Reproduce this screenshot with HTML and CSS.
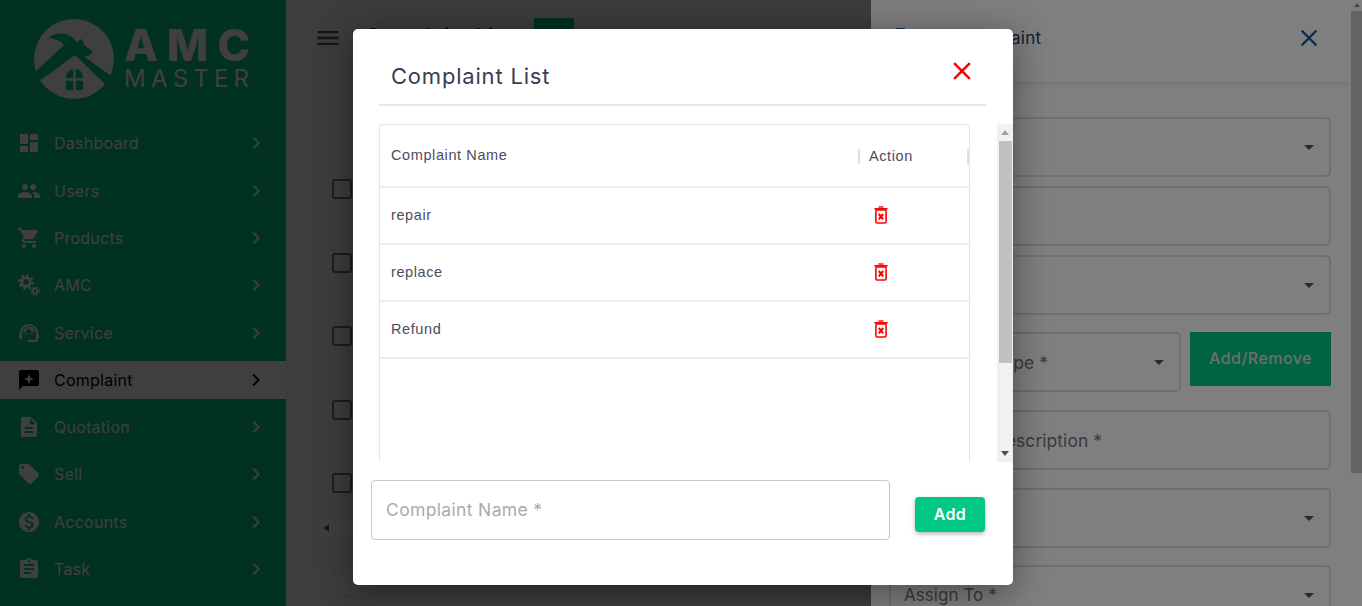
FILE: index.html
```html
<!DOCTYPE html>
<html lang="en">
<head>
<meta charset="utf-8">
<title>Complaint List</title>
<link rel="stylesheet" href="styles.css">
</head>
<body>
<svg class="defs" width="0" height="0" aria-hidden="true">
  <symbol id="chev" viewBox="0 0 24 24"><path d="M10 6L8.59 7.41 13.17 12l-4.58 4.59L10 18l6-6z"/></symbol>
  <symbol id="drop" viewBox="0 0 24 24"><path d="M7 10l5 5 5-5z"/></symbol>
  <symbol id="close" viewBox="0 0 24 24"><path d="M19 6.41L17.59 5 12 10.59 6.41 5 5 6.41 10.59 12 5 17.59 6.41 19 12 13.41 17.59 19 19 17.59 13.41 12z"/></symbol>
  <symbol id="trash" viewBox="0 0 14 18"><path d="M4.500 1h5" fill="none" stroke="currentColor" stroke-width="1.400"/><path d="M.5 2.900h13" fill="none" stroke="currentColor" stroke-width="1.800"/><rect x="1.900" y="4" width="10.200" height="13" rx="1.300" fill="none" stroke="currentColor" stroke-width="1.600"/><path d="M4.800 8l4.400 5.400M9.200 8l-4.400 5.400" fill="none" stroke="currentColor" stroke-width="2"/></symbol>
</svg>
<div class="app">
  <aside class="sidebar">
    <div class="logo">
      <svg class="logo-mark" viewBox="0 0 80 80" aria-hidden="true">
        <circle cx="40" cy="40" r="40" class="lm-fill"/>
        <path class="lm-cut" d="M0 54L30 26Q25 20 14 19 22 13 32 15L38 18 43 23 47 20 50 23 49 25 59 33 56 36 51 38 81 60 72 66 41 36 7 61z"/>
        <path class="lm-cut" d="M32 71V59Q32 50 40.500 50 49 50 49 59V71z"/>
        <path class="lm-line" d="M40.500 50V71M32 60.500H49"/>
      </svg>
      <div class="logo-text"><span class="logo-amc">AMC</span><span class="logo-master">MASTER</span></div>
    </div>
    <nav class="nav">
      <a class="nav-item"><svg class="nav-ic" viewBox="0 0 24 24"><path d="M3 13h8V3H3v10zm0 8h8v-6H3v6zm10 0h8V11h-8v10zm0-18v6h8V3h-8z"/></svg><span class="nav-label">Dashboard</span><svg class="nav-chev"><use href="#chev"/></svg></a>
      <a class="nav-item"><svg class="nav-ic" viewBox="0 0 24 24"><path d="M16 11c1.66 0 2.99-1.34 2.99-3S17.66 5 16 5c-1.66 0-3 1.34-3 3s1.34 3 3 3zm-8 0c1.66 0 2.99-1.34 2.99-3S9.66 5 8 5C6.34 5 5 6.34 5 8s1.34 3 3 3zm0 2c-2.33 0-7 1.17-7 3.5V19h14v-2.5c0-2.33-4.67-3.5-7-3.5zm8 0c-.29 0-.62.02-.97.05 1.16.84 1.97 1.97 1.97 3.45V19h6v-2.5c0-2.33-4.67-3.5-7-3.5z"/></svg><span class="nav-label">Users</span><svg class="nav-chev"><use href="#chev"/></svg></a>
      <a class="nav-item"><svg class="nav-ic" viewBox="0 0 24 24"><path d="M7 18c-1.1 0-1.99.9-1.99 2S5.9 22 7 22s2-.9 2-2-.9-2-2-2zM1 2v2h2l3.6 7.59-1.35 2.45c-.16.28-.25.61-.25.96 0 1.1.9 2 2 2h12v-2H7.42c-.14 0-.25-.11-.25-.25l.03-.12.9-1.63h7.45c.75 0 1.41-.41 1.75-1.03l3.58-6.49c.08-.14.12-.31.12-.48 0-.55-.45-1-1-1H5.21l-.94-2H1zm16 16c-1.1 0-1.99.9-1.99 2s.89 2 1.99 2 2-.9 2-2-.9-2-2-2z"/></svg><span class="nav-label">Products</span><svg class="nav-chev"><use href="#chev"/></svg></a>
      <a class="nav-item"><svg class="nav-ic" viewBox="0 0 24 24"><circle cx="9" cy="9" r="4.200" fill="none" stroke="currentColor" stroke-width="3"/><circle cx="9" cy="9" r="6.600" fill="none" stroke="currentColor" stroke-width="2.400" stroke-dasharray="2.600 2.600"/><circle cx="18" cy="18" r="2.400" fill="none" stroke="currentColor" stroke-width="1.800"/><circle cx="18" cy="18" r="4" fill="none" stroke="currentColor" stroke-width="1.600" stroke-dasharray="1.700 1.500"/></svg><span class="nav-label">AMC</span><svg class="nav-chev"><use href="#chev"/></svg></a>
      <a class="nav-item"><svg class="nav-ic" viewBox="0 0 24 24"><path d="M21 12.22C21 6.73 16.74 3 12 3c-4.69 0-9 3.65-9 9.28-.6.34-1 .98-1 1.72v2c0 1.1.9 2 2 2h1v-6.1c0-3.87 3.13-7 7-7s7 3.13 7 7V19h-8v2h8c1.1 0 2-.9 2-2v-1.22c.59-.31 1-.92 1-1.64v-2.3c0-.7-.41-1.31-1-1.62z"/><circle cx="9" cy="13" r="1"/><circle cx="15" cy="13" r="1"/><path d="M18 11.03C17.52 8.18 15.04 6 12.05 6c-3.03 0-6.29 2.51-6.03 6.45 2.47-1.01 4.33-3.21 4.86-5.89 1.31 2.63 4 4.44 7.12 4.47z"/></svg><span class="nav-label">Service</span><svg class="nav-chev"><use href="#chev"/></svg></a>
      <a class="nav-item nav-item-active"><svg class="nav-ic" viewBox="0 0 24 24"><path d="M20 2H4c-1.1 0-2 .9-2 2v18l4-4h14c1.1 0 2-.9 2-2V4c0-1.1-.9-2-2-2z"/><path class="nav-spark" d="M12 6l1.300 3.700L17 11l-3.700 1.300L12 16l-1.300-3.700L7 11l3.700-1.300z"/></svg><span class="nav-label">Complaint</span><svg class="nav-chev"><use href="#chev"/></svg></a>
      <a class="nav-item"><svg class="nav-ic" viewBox="0 0 24 24"><path d="M14 2H6c-1.1 0-1.99.9-1.99 2L4 20c0 1.1.89 2 1.99 2H18c1.1 0 2-.9 2-2V8l-6-6zm2 16H8v-2h8v2zm0-4H8v-2h8v2zm-3-5V3.500L18.500 9H13z"/></svg><span class="nav-label">Quotation</span><svg class="nav-chev"><use href="#chev"/></svg></a>
      <a class="nav-item"><svg class="nav-ic" viewBox="0 0 24 24"><path d="M21.41 11.58l-9-9C12.05 2.22 11.55 2 11 2H4c-1.1 0-2 .9-2 2v7c0 .55.22 1.05.59 1.42l9 9c.36.36.86.58 1.41.58.55 0 1.05-.22 1.41-.59l7-7c.37-.36.59-.86.59-1.41 0-.55-.23-1.06-.59-1.42zM5.500 7C4.670 7 4 6.330 4 5.500S4.670 4 5.500 4 7 4.670 7 5.500 6.330 7 5.500 7z"/></svg><span class="nav-label">Sell</span><svg class="nav-chev"><use href="#chev"/></svg></a>
      <a class="nav-item"><svg class="nav-ic" viewBox="0 0 24 24"><path d="M12 2C6.48 2 2 6.48 2 12s4.48 10 10 10 10-4.48 10-10S17.52 2 12 2zm1.41 16.09V20h-2.67v-1.93c-1.71-.36-3.16-1.46-3.27-3.4h1.96c.1 1.05.82 1.87 2.65 1.87 1.96 0 2.4-.98 2.4-1.59 0-.83-.44-1.61-2.67-2.14-2.48-.6-4.18-1.62-4.18-3.67 0-1.72 1.39-2.84 3.11-3.21V4h2.67v1.95c1.86.45 2.79 1.86 2.85 3.39H14.3c-.05-1.11-.64-1.87-2.22-1.87-1.5 0-2.4.68-2.4 1.64 0 .84.65 1.39 2.67 1.91s4.18 1.39 4.18 3.91c-.01 1.83-1.38 2.83-3.12 3.16z"/></svg><span class="nav-label">Accounts</span><svg class="nav-chev"><use href="#chev"/></svg></a>
      <a class="nav-item"><svg class="nav-ic" viewBox="0 0 24 24"><path d="M19 3h-4.18C14.4 1.84 13.3 1 12 1c-1.3 0-2.4.84-2.82 2H5c-1.1 0-2 .9-2 2v14c0 1.1.9 2 2 2h14c1.1 0 2-.9 2-2V5c0-1.1-.9-2-2-2zm-7 0c.55 0 1 .45 1 1s-.45 1-1 1-1-.45-1-1 .45-1 1-1zm2 14H7v-2h7v2zm3-4H7v-2h10v2zm0-4H7V7h10v2z"/></svg><span class="nav-label">Task</span><svg class="nav-chev"><use href="#chev"/></svg></a>
    </nav>
  </aside>
  <main class="main">
    <header class="topbar">
      <svg class="menu-ic" viewBox="0 0 24 24"><path d="M3 18h18v-2H3v2zm0-5h18v-2H3v2zm0-7v2h18V6H3z"/></svg>
      <h1 class="page-title">Complaint List</h1>
      <span class="page-add"></span>
    </header>
    <div class="rows">
      <div class="row"><span class="check"></span></div>
      <div class="row"><span class="check"></span></div>
      <div class="row"><span class="check"></span></div>
      <div class="row"><span class="check"></span></div>
      <div class="row row-last"><span class="check"></span></div>
    </div>
    <div class="hscroll"><span class="hscroll-arrow"></span><span class="hscroll-thumb"></span></div>
    <div class="table-foot"></div>
  </main>
</div>
<div class="backdrop"></div>
<section class="drawer">
  <div class="drawer-body">
    <header class="drawer-head">
      <span class="drawer-title"><span class="drawer-mark"></span>Create Complaint</span>
      <svg class="drawer-close"><use href="#close"/></svg>
    </header>
    <div class="form">
      <div class="field"><svg class="field-drop"><use href="#drop"/></svg></div>
      <div class="field"></div>
      <div class="field"><svg class="field-drop"><use href="#drop"/></svg></div>
      <div class="field-row">
        <div class="field field-grow"><span class="field-label">Complaint Type *</span><svg class="field-drop"><use href="#drop"/></svg></div>
        <span class="addremove"><span class="addremove-in">Add/Remove</span></span>
      </div>
      <div class="field"><span class="field-label">Complaint Description *</span></div>
      <div class="field field-gap"><svg class="field-drop"><use href="#drop"/></svg></div>
      <div class="field field-gap-sm"><span class="field-label">Assign To *</span><svg class="field-drop"><use href="#drop"/></svg></div>
    </div>
  </div>
  <div class="page-scroll"><span class="page-scroll-up"></span><span class="page-scroll-thumb"></span></div>
</section>
<div class="backdrop"></div>
<section class="modal">
  <header class="modal-head">
    <h2 class="modal-title">Complaint List</h2>
    <svg class="modal-close"><use href="#close"/></svg>
  </header>
  <div class="modal-scroll">
    <div class="grid">
      <div class="grid-row grid-head">
        <span class="cell">Complaint Name</span>
        <span class="cell-head-action">Action</span>
      </div>
      <div class="grid-row">
        <span class="cell">repair</span>
        <span class="cell-action"><svg class="trash"><use href="#trash"/></svg></span>
      </div>
      <div class="grid-row">
        <span class="cell">replace</span>
        <span class="cell-action"><svg class="trash"><use href="#trash"/></svg></span>
      </div>
      <div class="grid-row">
        <span class="cell">Refund</span>
        <span class="cell-action"><svg class="trash"><use href="#trash"/></svg></span>
      </div>
    </div>
    <div class="vscroll">
      <span class="vscroll-arrow vscroll-up"></span>
      <span class="vscroll-thumb"></span>
      <span class="vscroll-arrow vscroll-down"></span>
    </div>
  </div>
  <footer class="modal-foot">
    <div class="name-input">Complaint Name *</div>
    <button class="add-btn" type="button">Add</button>
  </footer>
</section>
</body>
</html>
```
FILE: styles.css
```css
* { box-sizing: border-box; }
html, body { margin: 0; height: 606px; overflow: hidden; }
body { font-family: Inter, "Liberation Sans", sans-serif; background: #fff; position: relative; color: #34344a; }
.defs { position: absolute; }

.app { display: flex; height: 606px; }

.sidebar { width: 286px; flex: none; background: #04c486; color: #fff; display: flex; flex-direction: column; }
.logo { height: 124.600px; flex: none; padding: 19px 0 0 34px; display: flex; gap: 10px; }
.logo-mark { width: 80px; height: 80px; flex: none; }
.lm-fill { fill: #fff; }
.lm-cut { fill: #04c486; }
.lm-line { stroke: #fff; stroke-width: 2.500; fill: none; }
.logo-text { display: flex; flex-direction: column; padding-top: 7px; }
.logo-amc { font-size: 44px; line-height: 38px; font-weight: 800; letter-spacing: 9px; }
.logo-master { font-size: 24px; line-height: 26px; margin-top: 2px; font-weight: 400; letter-spacing: 5.200px; }

.nav { display: flex; flex-direction: column; gap: 9.800px; }
.nav-item { height: 37.500px; display: flex; align-items: center; padding-left: 17px; color: #fff; font-size: 16px; letter-spacing: .25px; }
.nav-item-active { background: #fff; color: #000; }
.nav-ic { width: 24px; height: 24px; flex: none; fill: currentColor; }
.nav-spark { fill: #fff; }
.nav-label { margin-left: 13px; flex: 1; }
.nav-chev { width: 24px; height: 24px; margin-right: 18px; fill: currentColor; }

.main { flex: 1; background: #f6f6f6; padding-left: 28px; }
.topbar { height: 76px; display: flex; align-items: flex-start; }
.menu-ic { width: 28px; height: 28px; margin: 24px 0 0 0; fill: #555; flex: none; }
.page-title { margin: 22px 0 0 23px; font-size: 21px; line-height: 30px; font-weight: 500; letter-spacing: .3px; color: #222; }
.page-add { width: 40px; height: 40px; margin: 18px 0 0 22px; background: #04c486; }
.rows { padding-top: 76px; margin-left: 6px; }
.row { height: 73.500px; border-bottom: 1px solid #dedede; padding: 27px 0 0 12px; }
.row-last { border-bottom: 0; }
.check { display: block; width: 20px; height: 20px; border: 2px solid #777; border-radius: 3px; }
.hscroll { height: 17px; background: #fbfbfb; margin-left: 5px; display: flex; align-items: center; padding-left: 5px; }
.hscroll-arrow { width: 0; height: 0; border: 4px solid transparent; border-right: 5px solid #555; border-left: 0; }
.hscroll-thumb { width: 300px; height: 17px; background: #fff; margin-left: 7px; }
.table-foot { height: 60px; border-bottom: 1px solid #dedede; margin-left: 6px; }

.backdrop { position: absolute; inset: 0; background: rgba(0,0,0,.5); }

.drawer { position: absolute; top: 0; right: 0; width: 491px; height: 606px; background: #fff; display: flex; overflow: hidden; }
.drawer-body { flex: 1; min-width: 0; }
.drawer-head { height: 82px; display: flex; align-items: center; justify-content: space-between; padding: 0 28px 6px 26px; box-shadow: 0 2px 6px rgba(0,0,0,.12); }
.drawer-title { font-size: 17px; color: #1c3d66; position: relative; letter-spacing: .3px; }
.drawer-mark { width: 9px; height: 14px; background: #1e5da8; position: absolute; left: -1px; top: 0; }
.drawer-close { width: 28px; height: 28px; fill: #1a5aa0; }
.form { padding: 35px 20px 0 18px; display: flex; flex-direction: column; gap: 9px; }
.field { height: 60px; flex: none; border: 2px solid #dedede; border-radius: 5px; display: flex; align-items: center; justify-content: space-between; padding: 0 8px 0 13px; color: #777; font-size: 17.500px; letter-spacing: .05px; }
.field-row { display: flex; gap: 9px; margin: 8px 0 9px; align-items: flex-start; }
.field-grow { flex: 1; }
.field-gap { margin-top: 9px; }
.field-gap-sm { margin-top: 8px; font-size: 17px; }
.field-label { flex: 1; }
.field-drop { width: 24px; height: 24px; flex: none; margin-left: auto; fill: #555; }
.addremove { width: 141px; height: 54px; flex: none; background: #00c986; color: #ddd; display: flex; align-items: center; justify-content: center; font-size: 16px; font-weight: 500; padding-bottom: 2px; }
.addremove-in { letter-spacing: .45px; }
.page-scroll { width: 11px; flex: none; background: #fff; display: flex; flex-direction: column; align-items: center; }
.page-scroll-up { width: 0; height: 0; border: 3px solid transparent; border-bottom: 4px solid #888; border-top: 0; margin: 3px 0 4px; }
.page-scroll-thumb { width: 11px; height: 462px; background: #c6c6c6; }

.modal { position: absolute; left: 353px; top: 29px; width: 660px; height: 556px; background: #fff; border-radius: 5px; box-shadow: 0 11px 30px rgba(0,0,0,.25), 0 0 40px rgba(0,0,0,.2); display: flex; flex-direction: column; color: #34344a; }
.modal-head { height: 77px; margin: 0 26px; border-bottom: 2px solid #e8e8e8; display: flex; align-items: flex-start; justify-content: space-between; padding-left: 12px; }
.modal-title { margin: 32px 0 0 0; font-size: 22px; line-height: 30px; font-weight: 400; letter-spacing: .8px; color: #3c3c52; }
.modal-close { width: 30px; height: 30px; margin: 27px 10px 0 0; fill: #f00; }
.modal-scroll { height: 338px; margin-top: 18px; display: flex; overflow: hidden; flex: none; }
.grid { width: 591px; margin-left: 26px; border: 1px solid #e6e6e6; border-bottom: 0; border-radius: 4px 4px 0 0; font-family: "Liberation Sans", Arial, sans-serif; font-size: 14.500px; letter-spacing: .6px; color: #4c4c5e; height: 400px; }
.grid-row { height: 57px; display: grid; grid-template-columns: 478px 1fr; border-bottom: 2px solid #eee; align-items: center; }
.grid-head { height: 62.500px; }
.cell { padding-left: 11px; }
.cell-head-action { height: 15px; line-height: 15px; margin-top: 2px; border-left: 2px solid #e0e0e0; border-right: 2px solid #e0e0e0; padding-left: 9px; }
.cell-action { padding-left: 16px; display: flex; }
.trash { width: 14px; height: 18px; color: #f00; }
.vscroll { width: 16px; margin-left: 27px; background: #f1f1f1; display: flex; flex-direction: column; align-items: center; }
.vscroll-thumb { width: 13px; height: 222px; background: #c1c1c1; }
.vscroll-arrow { width: 0; height: 0; border: 4px solid transparent; flex: none; }
.vscroll-up { border-bottom: 5px solid #a3a3a3; border-top: 0; margin: 6px 0 6px; }
.vscroll-down { border-top: 5px solid #505050; border-bottom: 0; margin-top: auto; margin-bottom: 6px; }
.modal-foot { display: flex; padding: 18px 0 0 18px; align-items: flex-start; }
.name-input { width: 519px; height: 60px; border: 1px solid #c8c8c8; border-radius: 4px; display: flex; align-items: center; padding: 0 14px 2px; font-size: 17.500px; letter-spacing: .35px; color: #a9a9b4; }
.add-btn { width: 70px; height: 35px; margin: 17px 0 0 25px; border: 0; border-radius: 4px; background: #00c986; color: #fff; font: 600 16px Inter, "Liberation Sans", sans-serif; letter-spacing: .3px; box-shadow: 0 2px 4px rgba(0,0,0,.3); padding: 0 0 2px; }
```
